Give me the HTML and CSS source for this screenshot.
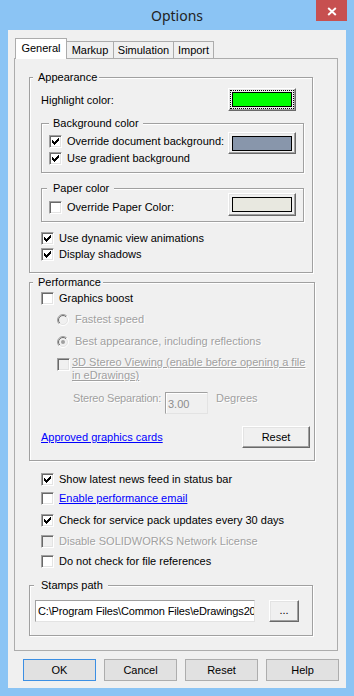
FILE: index.html
```html
<!DOCTYPE html>
<html>
<head>
<meta charset="utf-8">
<title>Options</title>
<link rel="stylesheet" href="styles.css">
</head>
<body>
<div class="titlebar">
  <div></div>
  <div class="title">Options</div>
  <div class="close"><svg width="10" height="9" viewBox="0 0 10 9"><path d="M1.2 1l7.6 7M8.8 1L1.2 8" stroke="#fff" stroke-width="1.9" fill="none"/></svg></div>
</div>
<div class="client">
  <div class="tabs">
    <div class="tab active t-general">General</div>
    <div class="tab t-markup">Markup</div>
    <div class="tab t-sim">Simulation</div>
    <div class="tab t-import">Import</div>
  </div>
  <div class="panel">
    <fieldset class="group g-appearance">
      <legend class="lg-top">Appearance</legend>
      <div class="hl-row">
        <span class="hl-label">Highlight color:</span>
        <div class="btn3d colorbtn cb-green"><span class="focusring"><span class="swatch sw-green"></span></span></div>
      </div>
      <fieldset class="group g-bg">
        <legend>Background color</legend>
        <div class="bg-body">
          <div class="bg-checks">
            <div class="check"><span class="cb"><svg width="11" height="11" viewBox="0 0 11 11" shape-rendering="crispEdges"><path d="M2 4h1v3H2z M3 5h1v3H3z M4 6h1v3H4z M5 5h1v3H5z M6 4h1v3H6z M7 3h1v3H7z M8 2h1v3H8z" fill="#000"/></svg></span><span>Override document background:</span></div>
            <div class="check"><span class="cb"><svg width="11" height="11" viewBox="0 0 11 11" shape-rendering="crispEdges"><path d="M2 4h1v3H2z M3 5h1v3H3z M4 6h1v3H4z M5 5h1v3H5z M6 4h1v3H6z M7 3h1v3H7z M8 2h1v3H8z" fill="#000"/></svg></span><span>Use gradient background</span></div>
          </div>
          <div class="btn3d colorbtn"><span class="swatch sw-slate"></span></div>
        </div>
      </fieldset>
      <fieldset class="group g-paper">
        <legend>Paper color</legend>
        <div class="paper-body">
          <div class="check paper-check"><span class="cb"></span><span>Override Paper Color:</span></div>
          <div class="btn3d colorbtn cb-paper"><span class="swatch sw-paper"></span></div>
        </div>
      </fieldset>
      <div class="app-checks">
        <div class="check"><span class="cb"><svg width="11" height="11" viewBox="0 0 11 11" shape-rendering="crispEdges"><path d="M2 4h1v3H2z M3 5h1v3H3z M4 6h1v3H4z M5 5h1v3H5z M6 4h1v3H6z M7 3h1v3H7z M8 2h1v3H8z" fill="#000"/></svg></span><span>Use dynamic view animations</span></div>
        <div class="check"><span class="cb"><svg width="11" height="11" viewBox="0 0 11 11" shape-rendering="crispEdges"><path d="M2 4h1v3H2z M3 5h1v3H3z M4 6h1v3H4z M5 5h1v3H5z M6 4h1v3H6z M7 3h1v3H7z M8 2h1v3H8z" fill="#000"/></svg></span><span>Display shadows</span></div>
      </div>
    </fieldset>

    <fieldset class="group g-perf">
      <legend class="lg-top">Performance</legend>
      <div class="check gb-row"><span class="cb"></span><span>Graphics boost</span></div>
      <div class="radio-row r-fast">
        <svg class="radio" width="12" height="12" viewBox="0 0 12 12"><defs><linearGradient id="ro" x1="0" y1="0" x2="1" y2="1"><stop offset="0.5" stop-color="#a0a0a0"/><stop offset="0.5" stop-color="#ffffff"/></linearGradient><linearGradient id="ri" x1="0" y1="0" x2="1" y2="1"><stop offset="0.5" stop-color="#696969"/><stop offset="0.5" stop-color="#e3e3e3"/></linearGradient></defs><circle cx="6" cy="6" r="5.5" fill="none" stroke="url(#ro)"/><circle cx="6" cy="6" r="4.5" fill="#f0f0f0" stroke="url(#ri)"/></svg>
        <span class="disabled">Fastest speed</span>
      </div>
      <div class="radio-row r-best">
        <svg class="radio" width="12" height="12" viewBox="0 0 12 12"><circle cx="6" cy="6" r="5.5" fill="none" stroke="url(#ro)"/><circle cx="6" cy="6" r="4.5" fill="#f0f0f0" stroke="url(#ri)"/><circle cx="6" cy="6" r="2" fill="#a0a0a0"/></svg>
        <span class="disabled">Best appearance, including reflections</span>
      </div>
      <div class="stereo-row">
        <span class="cb cb-dis"></span>
        <span class="disabled uline">3D Stereo Viewing (enable before opening a file<br>in eDrawings)</span>
      </div>
      <div class="sep-row">
        <span class="disabled sep-label">Stereo Separation:</span>
        <div class="edit edit-dis">3.00</div>
        <span class="disabled sep-unit">Degrees</span>
      </div>
      <div class="approved-row">
        <span class="link">Approved graphics cards</span>
        <div class="btn3d reset-btn">Reset</div>
      </div>
    </fieldset>

    <div class="main-checks">
      <div class="check mc1"><span class="cb"><svg width="11" height="11" viewBox="0 0 11 11" shape-rendering="crispEdges"><path d="M2 4h1v3H2z M3 5h1v3H3z M4 6h1v3H4z M5 5h1v3H5z M6 4h1v3H6z M7 3h1v3H7z M8 2h1v3H8z" fill="#000"/></svg></span><span>Show latest news feed in status bar</span></div>
      <div class="check mc2"><span class="cb"></span><span class="link">Enable performance email</span></div>
      <div class="check mc3"><span class="cb"><svg width="11" height="11" viewBox="0 0 11 11" shape-rendering="crispEdges"><path d="M2 4h1v3H2z M3 5h1v3H3z M4 6h1v3H4z M5 5h1v3H5z M6 4h1v3H6z M7 3h1v3H7z M8 2h1v3H8z" fill="#000"/></svg></span><span>Check for service pack updates every 30 days</span></div>
      <div class="check mc4"><span class="cb cb-dis"></span><span class="disabled">Disable SOLIDWORKS Network License</span></div>
      <div class="check mc5"><span class="cb"></span><span>Do not check for file references</span></div>
    </div>

    <fieldset class="group g-stamps">
      <legend>Stamps path</legend>
      <div class="stamps-row">
        <div class="edit stamps-edit">C:\Program Files\Common Files\eDrawings20</div>
        <div class="btn3d dots-btn">...</div>
      </div>
    </fieldset>
  </div>

  <div class="dlg-buttons">
    <div class="dbtn default">OK</div>
    <div class="dbtn">Cancel</div>
    <div class="dbtn">Reset</div>
    <div class="dbtn">Help</div>
  </div>
</div>
</body>
</html>
```

FILE: styles.css
```css
html, body {
  margin: 0;
  padding: 0;
}
body {
  width: 354px;
  height: 696px;
  overflow: hidden;
  background: #8bc4f4;
  font-family: "Liberation Sans", Arial, sans-serif;
  font-size: 11px;
  line-height: 13px;
  color: #000;
}

/* title bar */
.titlebar {
  height: 30px;
  display: grid;
  grid-template-columns: 1fr auto 1fr;
}
.title {
  font-family: "Noto Sans", "Open Sans", sans-serif;
  font-size: 14px;
  line-height: 31px;
  color: #222;
}
.close {
  justify-self: end;
  align-self: start;
  width: 31px;
  height: 21px;
  margin-right: 7px;
  background: #c75050;
  display: flex;
  align-items: center;
  justify-content: center;
}
.close svg { margin-top: 1px; }

/* client */
.client {
  box-sizing: border-box;
  height: 658px;
  margin: 0 8px;
  background: #f0f0f0;
  padding: 8px 0 0 6px;
}

/* tabs */
.tabs {
  display: flex;
  align-items: flex-end;
  height: 21px;
  margin-left: 1px;
}
.tab {
  box-sizing: border-box;
  height: 17px;
  margin-bottom: 1px;
  margin-left: -1px;
  border: 1px solid #acacac;
  border-bottom: none;
  background: #f0f0f0;
  display: flex;
  align-items: center;
  justify-content: center;
  padding-top: 1px;
}
.tab.active {
  position: relative;
  z-index: 1;
  height: 21px;
  margin-bottom: 0;
  margin-left: 0;
  background: #fff;
  padding-top: 0;
  padding-bottom: 1px;
}
.t-general { width: 52px; }
.t-markup { width: 48px; }
.t-sim { width: 61px; }
.t-import { width: 41px; }

.panel {
  box-sizing: border-box;
  width: 324px;
  height: 593px;
  margin-top: -1px;
  border: 1px solid #acacac;
  background: #f0f0f0;
  padding: 0 0 0 14px;
}

/* group boxes */
.group {
  box-sizing: border-box;
  display: block;
  min-width: 0;
  margin: 0;
  padding: 0;
  border: 1px solid #a0a0a0;
  box-shadow: inset 1px 1px #fff, 1px 1px #fff;
}
.group > legend {
  padding: 0 3px;
  margin-left: 0;
  line-height: 13px;
  background: #f0f0f0;
}
.group > legend.lg-top {
  margin-left: 3px;
  padding: 0 2px 0 5px;
}

.g-appearance {
  width: 284px;
  margin-top: 12px;
  padding-bottom: 10px;
}
.hl-row {
  display: flex;
  align-items: center;
  height: 23px;
  margin-top: 4px;
  padding: 0 16px 0 11px;
}
.hl-label { padding-top: 2px; }

.g-bg {
  width: 263px;
  margin: 6px 0 0 11px;
}
.g-bg > legend { margin-left: 7px; padding: 0 4px; }
.bg-body {
  display: flex;
  align-items: flex-start;
  padding: 2px 7px 5px 7px;
}
.bg-checks { margin-top: 1px; }
.bg-checks .check { height: 17px; }

.g-paper {
  width: 263px;
  margin: 9px 0 0 11px;
}
.g-paper > legend { margin-left: 5px; padding: 0 5px 0 6px; }
.paper-body {
  display: flex;
  align-items: flex-start;
  padding: 0 7px 5px 7px;
}
.paper-check { margin-top: 6px; height: 13px; }

.app-checks { margin: 8px 0 0 11px; }
.app-checks .check { height: 16px; }

/* checkbox */
.check {
  display: flex;
  align-items: center;
}
.cb {
  box-sizing: border-box;
  flex: none;
  width: 13px;
  height: 13px;
  margin-right: 5px;
  border: 1px solid;
  border-color: #a0a0a0 #fff #fff #a0a0a0;
  box-shadow: inset 1px 1px #696969, inset -1px -1px #e3e3e3;
  background: #fff;
  display: block;
}
.cb svg { display: block; }
.cb-dis { background: #f0f0f0; }

/* color buttons */
.btn3d {
  box-sizing: border-box;
  border: 1px solid;
  border-color: #fff #696969 #696969 #fff;
  box-shadow: inset -1px -1px #a0a0a0, inset 1px 1px #e3e3e3;
  background: #f0f0f0;
  display: flex;
  align-items: center;
  justify-content: center;
}
.colorbtn {
  flex: none;
  width: 68px;
  height: 22px;
  margin-left: auto;
}
.cb-green { height: 23px; }
.cb-paper { height: 23px; margin-top: -2px; }
.focusring {
  display: block;
  padding: 1px;
  outline: 1px dotted #000;
  outline-offset: 0;
}
.swatch {
  display: block;
  box-sizing: border-box;
  width: 60px;
  height: 15px;
  border: 1px solid #000;
}
.sw-green { background: #00ff00; }
.sw-slate { background: #8896ab; }
.sw-paper { background: #e8e8e0; }

/* performance */
.g-perf {
  width: 286px;
  margin-top: 3px;
  padding: 0 4px 12px 0;
}
.gb-row { margin: 3px 0 0 11px; height: 13px; }
.radio-row {
  display: flex;
  align-items: center;
  height: 13px;
  margin-left: 27px;
}
.r-fast { margin-top: 8px; }
.r-best { margin-top: 9px; }
.radio { display: block; margin-right: 6px; flex: none; }
.disabled {
  color: #a0a0a0;
  text-shadow: 1px 1px 0 #fff;
}
.uline { text-decoration: underline; }
.stereo-row {
  display: flex;
  align-items: flex-start;
  margin: 8px 0 0 27px;
}
.stereo-row .cb { margin: 2px 2px 0 0; }
.sep-row {
  display: flex;
  align-items: flex-start;
  margin: 10px 0 0 43px;
}
.sep-label { width: 92px; flex: none; letter-spacing: -0.2px; }
.edit {
  box-sizing: border-box;
  height: 22px;
  border: 1px solid;
  border-color: #a0a0a0 #e3e3e3 #e3e3e3 #a0a0a0;
  box-shadow: inset 1px 1px #fff;
  padding: 0 2px;
  line-height: 20px;
  white-space: nowrap;
  overflow: hidden;
}
.edit-dis {
  flex: none;
  width: 43px;
  background: #f0f0f0;
  color: #8d8d8d;
  padding-top: 1px;
}
.sep-unit { margin-left: 8px; }
.approved-row {
  display: flex;
  align-items: center;
  margin: 12px 0 0 11px;
  height: 22px;
}
.link {
  color: #0000ff;
  text-decoration: underline;
}
.reset-btn {
  width: 68px;
  height: 22px;
  margin-left: auto;
}

/* main checks */
.main-checks { margin-left: 12px; }
.main-checks .check { height: 13px; }
.mc1 { margin-top: 12px; }
.mc2 { margin-top: 6px; }
.mc3 { margin-top: 9px; }
.mc4 { margin-top: 8px; }
.mc5 { margin-top: 7px; }

/* stamps */
.g-stamps {
  width: 284px;
  margin-top: 11px;
  padding: 8px 0 13px 0;
}
.g-stamps > legend { margin-left: 4px; padding: 0 5px 0 7px; }
.stamps-row { display: flex; }
.stamps-edit {
  flex: none;
  width: 220px;
  margin-left: 5px;
  background: #fff;
  letter-spacing: -0.15px;
}
.dots-btn {
  flex: none;
  width: 30px;
  height: 22px;
  margin-left: 14px;
  padding-bottom: 2px;
}

/* dialog buttons */
.dlg-buttons {
  display: flex;
  gap: 8px;
  margin: 8px 0 0 9px;
}
.dbtn {
  box-sizing: border-box;
  width: 73px;
  height: 22px;
  border: 1px solid #adadad;
  background: #e1e1e1;
  display: flex;
  align-items: center;
  justify-content: center;
}
.dbtn.default { border-color: #3c8fe3; }
```
